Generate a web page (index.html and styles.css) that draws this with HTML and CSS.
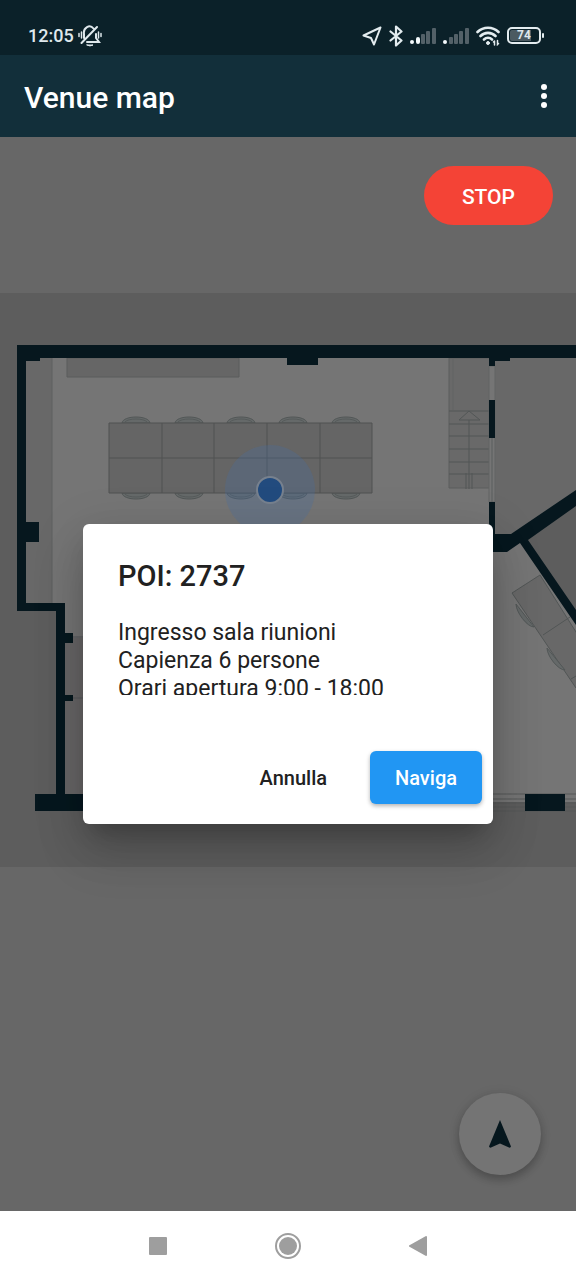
FILE: index.html
```html
<!DOCTYPE html>
<html lang="it">
<head>
<meta charset="utf-8">
<meta name="viewport" content="width=device-width, initial-scale=1">
<title>Venue map</title>
<link rel="stylesheet" href="styles.css">
</head>
<body>
<div class="screen">
  <div class="status-bar">
    <div class="status-left">
      <span class="clock">12:05</span>
      <svg class="status-bell" width="24" height="22" viewBox="0 0 24 22" fill="none" stroke="#dfe8ec" stroke-width="2" stroke-linecap="round" aria-hidden="true">
        <path d="M6 13V9a5.500 6.500 0 0 1 9.500-5.500M18 9v4l3 4H9M19 2L3.500 18"/>
        <path d="M9 20h6q-3 2-6 0z" fill="#dfe8ec" stroke-width="1"/>
        <path d="M1 8.500v3M3.500 7v6M20.500 7v6M23 8.500v3" stroke-width="1.500"/>
      </svg>
    </div>
    <div class="status-right">
      <svg width="20" height="20" viewBox="0 0 20 20" fill="none" stroke="#e3ecef" stroke-width="2" stroke-linejoin="round" aria-hidden="true"><path d="M18.500 1.500L1.500 9.500l7.500 2.500 3 6.500z"/></svg>
      <svg width="14" height="22" viewBox="0 0 14 22" fill="none" stroke="#e3ecef" stroke-width="2.200" stroke-linejoin="round" stroke-linecap="round" aria-hidden="true"><path d="M1.500 6.500l11 9-5.500 5V1.500l5.500 5-11 9"/></svg>
      <svg width="26" height="18" viewBox="0 0 26 18" aria-hidden="true">
        <g fill="#f4fafc"><rect x="0" y="13" width="4" height="4" rx="2"/><rect x="6" y="10" width="4" height="7" rx="2"/></g>
        <g fill="#536168"><rect x="11" y="7" width="4" height="10" rx="1"/><rect x="16" y="4" width="4" height="13" rx="1"/><rect x="22" y="1" width="4" height="16" rx="1"/></g>
      </svg>
      <svg width="26" height="18" viewBox="0 0 26 18" aria-hidden="true">
        <rect x="0" y="13" width="4" height="4" rx="2" fill="#f4fafc"/>
        <g fill="#536168"><rect x="6" y="10" width="4" height="7" rx="1"/><rect x="11" y="7" width="4" height="10" rx="1"/><rect x="16" y="4" width="4" height="13" rx="1"/><rect x="22" y="1" width="4" height="16" rx="1"/></g>
      </svg>
      <svg width="24" height="20" viewBox="0 0 24 20" fill="none" stroke="#e3ecef" stroke-width="2.600" stroke-linecap="round" aria-hidden="true">
        <path d="M1.500 6a15 15 0 0 1 21 0M4.500 10a10.500 10.500 0 0 1 15 0M8 13.500a5.800 5.800 0 0 1 8 0"/>
        <circle cx="12" cy="17" r="1.500" fill="#e3ecef" stroke-width="1"/>
        <path d="M18.500 15v4M18.500 15l-1 1M21.500 14.500v4l1-1" stroke-width="1.500"/>
      </svg>
      <span class="battery"><span class="battery-level">74</span></span>
    </div>
  </div>

  <header class="app-bar">
    <h1 class="app-title">Venue map</h1>
    <button class="menu-button" type="button" aria-label="Menu">
      <svg width="8" height="26" viewBox="0 0 8 26" fill="#fff" aria-hidden="true"><circle cx="4" cy="4" r="3"/><circle cx="4" cy="13" r="3"/><circle cx="4" cy="22" r="3"/></svg>
    </button>
  </header>

  <main class="map">
    <div class="map-actions">
      <button class="stop-button" type="button">STOP</button>
    </div>

    <svg class="floor-plan" viewBox="0 293 576 574" role="img" aria-label="Planimetria">
      <defs>
        <g id="chair-top"><path d="M-14 0C-13-8 13-8 14 0z" fill="#656969" stroke="#525757"/><path d="M-11-1C-8-5 8-5 11-1" fill="none" stroke="#565b5b"/></g>
      </defs>
      <rect x="0" y="293" width="576" height="574" fill="#5d5d5d"/>
      <path d="M23 352H576V802H60V606H23z" fill="#757575"/>
      <path d="M26 358H52V605H26z" fill="#686868"/>
      <path d="M52 358V603" stroke="#5f6161" fill="none"/>
      <path d="M67 358H239V377H67z" fill="#666" stroke="#5a5d5d"/>
      <path d="M65 638H180V795H65z" fill="#686667"/>
      <path d="M72 637H180M72 698H180" stroke="#55565b" fill="none"/>
      <path d="M495 358H576V493L510 536H495z" fill="#686868"/>
      <path d="M576 500V622L525 540z" fill="#5d5d5d"/>

      <use href="#chair-top" x="136" y="423"/><use href="#chair-top" x="189" y="423"/><use href="#chair-top" x="241" y="423"/><use href="#chair-top" x="293" y="423"/><use href="#chair-top" x="346" y="423"/>
      <g transform="matrix(1 0 0 -1 0 986)"><use href="#chair-top" x="136" y="493"/><use href="#chair-top" x="189" y="493"/><use href="#chair-top" x="241" y="493"/><use href="#chair-top" x="293" y="493"/><use href="#chair-top" x="346" y="493"/></g>
      <path d="M109 423H372V493H109zM109 458H372M162 423V493M214 423V493M267 423V493M320 423V493" fill="#656565" stroke="#505353"/>

      <path d="M449 358H490V488H449z" fill="#696969" stroke="#5c5e5e"/>
      <path d="M453 358V410" stroke="#626464"/>
      <path d="M449 411H490M449 424H490M449 436H490M449 449H490M449 462H490M449 474H490M469 420V473M459 420L469 411L480 420zM466 473V489M469 473V489M472 473V489" fill="none" stroke="#525656"/>
      <path d="M489 366H495V502H489z" fill="#757575" stroke="#626565"/>
      <path d="M492 438V502" stroke="#5b5e5e"/>

      <path d="M512 593L540 575L600 670L576 688z" fill="#686868" stroke="#525656"/>
      <path d="M543 635L570 617M571 679L576 676" stroke="#525656"/>
      <path d="M516 604C516 612 527 627 534 627zM547 648C547 656 558 670 565 670z" fill="#656969" stroke="#525757"/>
      <path d="M480 794H576M480 799H576M480 803H576M480 807H576M480 811H576" stroke="#565959"/>

      <g fill="#06171e">
        <path d="M17 345H576V358H510V361H495V366H489V358H318V365H287V358H40V361H26V522H39V542H26V603H65V633H73V643H65V695H73V701H65V794H170V811H35V794H56V611H17z"/>
        <path d="M489 400H495V438H489zM489 502H495V534H511L576 490V506L528 540L576 610V625L520 543L507 552H480V534H489z"/>
        <path d="M525 794H565V811H525z"/>
      </g>

      <circle cx="270" cy="490" r="45" fill="#4470ad" fill-opacity=".25"/>
      <circle cx="270" cy="490" r="13" fill="#224b7e" stroke="#77818e" stroke-width="2"/>
    </svg>

    <div class="locate-row">
      <button class="locate-button" type="button" aria-label="Posizione">
        <svg width="24" height="28" viewBox="0 0 24 28" fill="#06171e" aria-hidden="true"><path d="M12 0L23 26.500Q22.500 28 21 27.500L12 23.500L3 27.500Q1.500 28 1 26.500z"/></svg>
      </button>
    </div>

    <div class="dialog-layer">
      <section class="dialog" role="dialog" aria-modal="true" aria-labelledby="poi-title">
        <h2 class="dialog-title" id="poi-title">POI: 2737</h2>
        <p class="dialog-text">Ingresso sala riunioni<br>Capienza 6 persone<br>Orari apertura 9:00 - 18:00</p>
        <div class="dialog-actions">
          <button class="button" type="button">Annulla</button>
          <button class="button button-primary" type="button">Naviga</button>
        </div>
      </section>
    </div>
  </main>

  <nav class="system-nav" aria-label="Navigazione">
    <button class="nav-button" type="button" aria-label="Recenti"><svg width="18" height="18" viewBox="0 0 18 18" fill="#9e9e9e"><rect width="18" height="18" rx="1"/></svg></button>
    <button class="nav-button" type="button" aria-label="Home"><svg width="28" height="28" viewBox="0 0 28 28" fill="#9e9e9e"><circle cx="14" cy="14" r="12" fill="none" stroke="#9e9e9e" stroke-width="2"/><circle cx="14" cy="14" r="9"/></svg></button>
    <button class="nav-button" type="button" aria-label="Indietro"><svg width="18" height="20" viewBox="0 0 18 20" fill="#9e9e9e"><path d="M17 0Q18 0 18 1V19Q18 20 17 20L0 10.500V9.500z"/></svg></button>
  </nav>
</div>
</body>
</html>
```

FILE: styles.css
```css
* {
  box-sizing: border-box;
}

body {
  margin: 0;
  font-family: Roboto, "Liberation Sans", sans-serif;
  color: #212121;
}

button {
  border: 0;
  padding: 0;
  background: none;
  font: inherit;
  color: inherit;
  cursor: pointer;
}

svg {
  display: block;
}

.screen {
  display: flex;
  flex-direction: column;
  min-height: 100vh;
}

.status-bar {
  display: flex;
  align-items: center;
  justify-content: space-between;
  height: 55px;
  padding: 16px 35px 0 28px;
  background: #0b2129;
  color: #dfe8ec;
}

.status-left {
  display: flex;
  align-items: center;
  gap: 4px;
}

.clock {
  font-size: 18px;
  line-height: 20px;
  font-weight: 500;
}

.status-right {
  display: flex;
  align-items: center;
  gap: 7px;
}

.battery {
  position: relative;
  width: 34px;
  height: 17px;
  padding: 1px;
  border: 2px solid #e3ecef;
  border-radius: 5px;
}

.battery::after {
  content: "";
  position: absolute;
  top: 4px;
  right: -5px;
  width: 2px;
  height: 5px;
  border-radius: 1px;
  background: #e3ecef;
}

.battery-level {
  display: block;
  border-radius: 2px;
  background: linear-gradient(90deg, #4b5a61 74%, transparent 74%);
  font-size: 12px;
  line-height: 11px;
  font-weight: 700;
  text-align: center;
}

.app-bar {
  display: flex;
  align-items: center;
  justify-content: space-between;
  height: 82px;
  padding: 4px 24px 0;
  background: #122f3a;
  color: #fff;
}

.app-title {
  margin: 0;
  font-size: 30px;
  line-height: 36px;
  font-weight: 500;
}

.menu-button {
  display: grid;
  justify-items: center;
  align-items: start;
  width: 17px;
  height: 30px;
}

.map {
  position: relative;
  flex: 1;
  display: flex;
  flex-direction: column;
  background: #676767;
}

.map-actions {
  display: flex;
  justify-content: flex-end;
  padding: 29px 23px 68px;
}

.stop-button {
  height: 59px;
  padding: 2px 38px 0;
  border-radius: 30px;
  background: #f44336;
  color: #fff;
  font-size: 21px;
  font-weight: 500;
}

.floor-plan {
  width: 100%;
  height: auto;
}

.locate-row {
  display: flex;
  justify-content: flex-end;
  margin-top: auto;
  padding: 0 35px 36px;
}

.locate-button {
  display: grid;
  place-items: center;
  width: 82px;
  height: 82px;
  border-radius: 50%;
  background: #747474;
  box-shadow: 0 5px 8px rgba(0, 0, 0, .2), 0 1px 12px rgba(0, 0, 0, .1);
}

.dialog-layer {
  position: absolute;
  inset: 0;
  display: grid;
  align-items: center;
  padding: 0 83px;
}

.dialog {
  padding: 34px 11px 20px 35px;
  border-radius: 6px;
  background: #fff;
  box-shadow: 0 16px 22px -10px rgba(0, 0, 0, .2), 0 30px 50px 0 rgba(0, 0, 0, .14), 0 12px 50px 6px rgba(0, 0, 0, .1);
}

.dialog-title {
  margin: 0 0 24px;
  font-size: 29px;
  line-height: 37px;
  font-weight: 500;
}

.dialog-text {
  height: 76px;
  margin: 0 24px 56px 0;
  overflow: hidden;
  font-size: 23px;
  line-height: 28px;
}

.dialog-actions {
  display: flex;
  justify-content: flex-end;
  gap: 18px;
}

.button {
  height: 53px;
  padding: 0 25px;
  border-radius: 6px;
  font-size: 20px;
  font-weight: 500;
}

.button-primary {
  background: #2196f3;
  color: #fff;
  box-shadow: 0 2px 4px rgba(0, 0, 0, .3);
}

.system-nav {
  display: flex;
  align-items: center;
  justify-content: center;
  gap: 80px;
  height: 69px;
  background: #fff;
}

.nav-button {
  display: grid;
  place-items: center;
  width: 50px;
  height: 50px;
}
```
